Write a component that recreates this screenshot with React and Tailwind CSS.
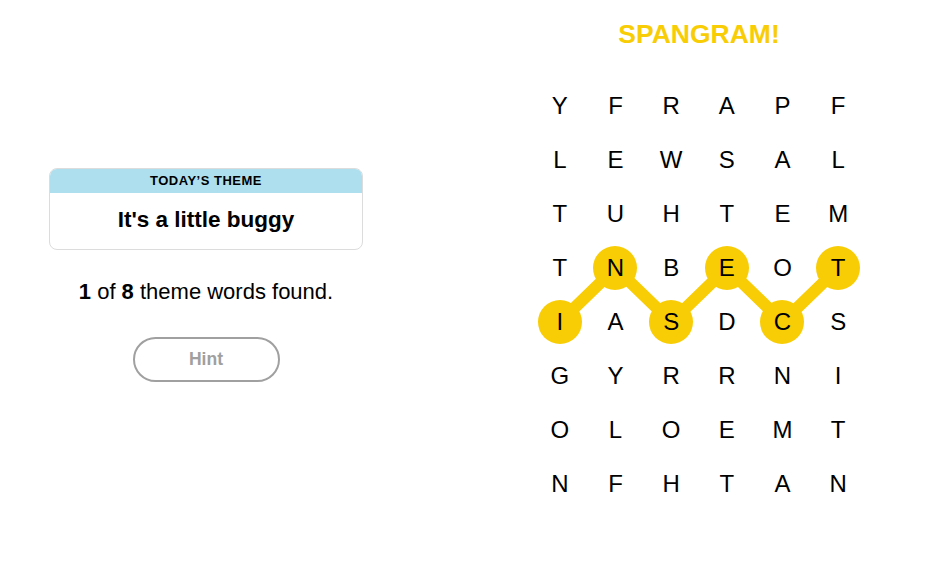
import React from 'react';

const GRID = [
  'YFRAPF',
  'LEWSAL',
  'TUHTEM',
  'TNBEOT',
  'IASDCS',
  'GYRRNI',
  'OLOEMT',
  'NFHTAN'
];

// spangram path: [col, row]
const PATH = [[0, 4], [1, 3], [2, 4], [3, 3], [4, 4], [5, 3]];
const CELL_W = 55.7;
const CELL_H = 54;
const YELLOW = '#f8cd05';

function isOnPath(c, r) {
  return PATH.some(([pc, pr]) => pc === c && pr === r);
}

function Board() {
  const points = PATH.map(([c, r]) => `${c * CELL_W + CELL_W / 2},${r * CELL_H + CELL_H / 2}`).join(' ');
  return (
    <div className="relative w-[334px]">
      <svg className="absolute inset-0" width="334" height="432" viewBox="0 0 334 432">
        <polyline points={points} fill="none" stroke={YELLOW} strokeWidth="12" strokeLinejoin="round" />
      </svg>
      <div className="relative grid grid-cols-6">
        {GRID.map((row, r) =>
          row.split('').map((ch, c) => (
            <div key={`${r}-${c}`} className="h-[54px] flex items-center justify-center">
              <div
                className={`w-[44px] h-[44px] rounded-full flex items-center justify-center text-[24px] text-black ${isOnPath(c, r) ? 'bg-[#f8cd05]' : ''}`}
              >
                {ch}
              </div>
            </div>
          ))
        )}
      </div>
    </div>
  );
}

export default function App() {
  return (
    <div className="w-[934px] h-[586px] bg-white flex font-['Liberation_Sans',Arial,sans-serif]">
      <div className="w-[412px] flex flex-col items-center pt-[168px]">
        <div className="w-[314px] rounded-lg border border-[#dcdcdc] overflow-hidden">
          <div className="h-[24px] bg-[#aedfee] flex items-center justify-center text-[13px] font-semibold tracking-[0.5px] text-black">
            TODAY’S THEME
          </div>
          <div className="h-[56px] flex items-center justify-center text-[22.5px] font-bold text-black pb-[3px]">
            It's a little buggy
          </div>
        </div>
        <div className="mt-[25px] text-[22px] text-black">
          <span className="font-bold">1</span> of <span className="font-bold">8</span> theme words found.
        </div>
        <button className="mt-[29px] w-[147px] h-[45px] rounded-full border-2 border-[#a0a0a0] text-[17.5px] font-bold text-[#a0a0a0] flex items-center justify-center">
          Hint
        </button>
      </div>
      <div className="ml-[52px] w-[470px] flex flex-col items-center">
        <div className="mt-[18px] h-[34px] flex items-center text-[26.5px] font-bold text-[#f8cd05]">
          SPANGRAM!
        </div>
        <div className="mt-[27px]">
          <Board />
        </div>
      </div>
    </div>
  );
}
